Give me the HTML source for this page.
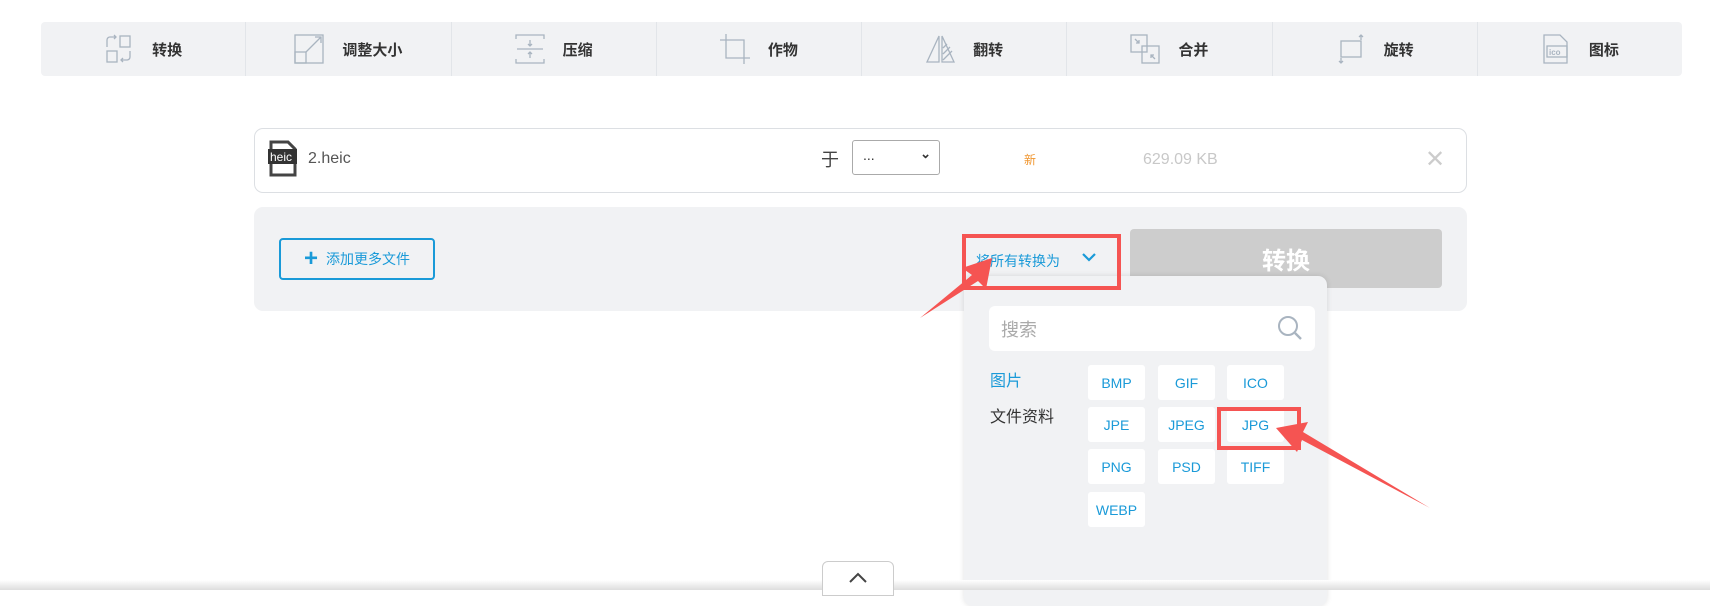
<!DOCTYPE html>
<html><head><meta charset="utf-8"><style>
*{box-sizing:border-box;margin:0;padding:0}
body{width:1710px;height:590px;overflow:hidden;background:#fff;font-family:"Liberation Sans","Noto Sans CJK SC",sans-serif;position:relative}
.tb{position:absolute;left:41px;top:22px;width:1641px;height:54px;background:#f1f2f4;border-radius:4px;display:flex}
.ti{flex:1;display:flex;align-items:center;justify-content:center;gap:18px;border-right:1px solid #e2e5e9;font-size:15px;font-weight:bold;color:#333}
.ti:last-child{border-right:none}
.ti svg{width:30px;height:30px}
.abs{position:absolute}
.fmt{position:absolute;width:57px;height:35px;background:#fff;border-radius:3px;color:#1a9ad8;font-size:14px;display:flex;align-items:center;justify-content:center}
</style></head><body>
<div class="tb">
<div class="ti"><svg viewBox="0 0 30 30" fill="none" stroke="#a9b4c0" stroke-width="1.3"><rect x="16" y="2" width="10" height="11"/><rect x="3" y="17" width="10" height="11"/><path d="M3 13V6a3 3 0 0 1 3-3h6M10 1l2 2-2 2M26 17v6a3 3 0 0 1-3 3h-6M19 24l-2 2 2 2"/></svg>转换</div>
<div class="ti"><svg viewBox="0 0 30 30" fill="none" stroke="#a9b4c0" stroke-width="1.3"><rect x="1" y="1" width="28" height="28"/><rect x="1" y="18" width="11" height="11"/><path d="M12 18L27 3M21 3h6v6"/></svg>调整大小</div>
<div class="ti"><svg viewBox="0 0 30 30" fill="none" stroke="#a9b4c0" stroke-width="1.3"><path d="M1 5V1h28v4M1 25v4h28v-4M2 15h26M15 6v6M13 10l2 2 2-2M15 24v-6M13 20l2-2 2 2"/></svg>压缩</div>
<div class="ti"><svg viewBox="0 0 30 30" fill="none" stroke="#a9b4c0" stroke-width="1.3"><path d="M6 0v24h24M0 6h24v24"/></svg>作物</div>
<div class="ti"><svg viewBox="0 0 30 30" fill="none" stroke="#a9b4c0" stroke-width="1.3"><path d="M14 2L2 28h12zM17 2l12 26H17zM18 26l9-9M18 20l7-7M18 14l4-4"/></svg>翻转</div>
<div class="ti"><svg viewBox="0 0 30 30" fill="none" stroke="#a9b4c0" stroke-width="1.3"><rect x="1" y="1" width="16" height="17"/><rect x="12" y="12" width="17" height="17"/><path d="M5 5l4 4M9 6v3H6M25 25l-4-4M21 24v-3h3"/></svg>合并</div>
<div class="ti"><svg viewBox="0 0 30 30" fill="none" stroke="#a9b4c0" stroke-width="1.3"><rect x="5" y="7" width="20" height="16"/><path d="M25 6V2M23 3l2-2 2 2M5 24v4M3 27l2 2 2-2"/></svg>旋转</div>
<div class="ti"><svg viewBox="0 0 30 30" fill="none" stroke="#a9b4c0" stroke-width="1.3"><path d="M3 1h16l7 7v21H3z"/><rect x="6" y="12" width="20" height="11"/><text x="8" y="21" font-size="8" fill="#a9b4c0" stroke="none" font-family="Liberation Sans">ico</text></svg>图标</div>
</div>

<div class="abs" style="left:254px;top:128px;width:1213px;height:65px;border:1px solid #dcdfe3;border-radius:9px"></div>
<svg class="abs" style="left:268px;top:140px" width="29" height="37" viewBox="0 0 29 37"><path d="M3 2h17l7 7v26H3z" fill="#fff" stroke="#444" stroke-width="3"/><rect x="0" y="9" width="29" height="15" fill="#333"/><text x="2" y="21" font-size="12" fill="#fff" font-family="Liberation Sans">heic</text></svg>
<div class="abs" style="left:308px;top:150px;font-size:16px;color:#555">2.heic</div>
<div class="abs" style="left:821px;top:146px;font-size:18px;color:#444">于</div>
<div class="abs" style="left:852px;top:140px;width:88px;height:35px;border:1px solid #aaa;border-radius:3px;font-size:14px;color:#333;padding:6px 0 0 10px">...<span style="position:absolute;right:8px;top:5px;font-size:13px;font-weight:bold">&#8964;</span></div>
<div class="abs" style="left:1024px;top:151px;font-size:12px;color:#f0962f">新</div>
<div class="abs" style="left:1143px;top:151px;font-size:16px;color:#c8c8c8">629.09 KB</div>
<div class="abs" style="left:1425px;top:148px;font-size:24px;color:#ccc;line-height:24px">✕</div>

<div class="abs" style="left:254px;top:207px;width:1213px;height:104px;background:#f1f2f4;border-radius:9px"></div>
<div class="abs" style="left:279px;top:238px;width:156px;height:42px;border:2px solid #1a9ad8;border-radius:4px;color:#1a9ad8;font-size:14px;display:flex;align-items:center;justify-content:center;gap:8px"><span style="font-size:24px;font-weight:bold;line-height:20px">+</span>添加更多文件</div>
<div class="abs" style="left:976px;top:251px;font-size:14px;color:#1a9ad8">将所有转换为</div>
<svg class="abs" style="left:1082px;top:253px" width="14" height="10"><path d="M1 1l6 6 6-6" fill="none" stroke="#1a9ad8" stroke-width="2.2"/></svg>
<div class="abs" style="left:1130px;top:229px;width:312px;height:59px;background:#cdcdcd;border-radius:4px;color:#fff;font-size:24px;font-weight:bold;display:flex;align-items:center;justify-content:center">转换</div>

<div class="abs" style="left:964px;top:276px;width:363px;height:330px;background:#f1f2f4;border-radius:9px;box-shadow:0 0 6px rgba(0,0,0,.12)"></div>
<div class="abs" style="left:989px;top:306px;width:326px;height:45px;background:#fff;border-radius:6px"></div>
<div class="abs" style="left:1001px;top:316px;font-size:18px;color:#aaa">搜索</div>
<svg class="abs" style="left:1277px;top:315px" width="26" height="26"><circle cx="11" cy="11" r="9" fill="none" stroke="#a9b4c0" stroke-width="2"/><path d="M18 18l6 6" stroke="#a9b4c0" stroke-width="2.4"/></svg>
<div class="abs" style="left:990px;top:367px;font-size:16px;color:#1a9ad8">图片</div>
<div class="abs" style="left:990px;top:403px;font-size:16px;color:#333">文件资料</div>
<div class="fmt" style="left:1088px;top:365px">BMP</div>
<div class="fmt" style="left:1158px;top:365px">GIF</div>
<div class="fmt" style="left:1227px;top:365px">ICO</div>
<div class="fmt" style="left:1088px;top:407px">JPE</div>
<div class="fmt" style="left:1158px;top:407px">JPEG</div>
<div class="fmt" style="left:1227px;top:407px">JPG</div>
<div class="fmt" style="left:1088px;top:449px">PNG</div>
<div class="fmt" style="left:1158px;top:449px">PSD</div>
<div class="fmt" style="left:1227px;top:449px">TIFF</div>
<div class="fmt" style="left:1088px;top:492px">WEBP</div>

<div class="abs" style="left:962px;top:234px;width:159px;height:56px;border:4px solid #f55452"></div>
<div class="abs" style="left:1217px;top:407px;width:84px;height:43px;border:4px solid #f55452"></div>
<svg class="abs" style="left:0;top:0" width="1710" height="590"><path d="M920 318L972 275L962 268L992 258L986 289L978 281Z" fill="#f55452"/><path d="M1430 508L1302 440L1297 452L1276 428L1308 422L1303 432Z" fill="#f55452"/></svg>

<div class="abs" style="left:0;top:580px;width:1710px;height:10px;background:linear-gradient(#fff,#ddd)"></div>
<div class="abs" style="left:822px;top:561px;width:72px;height:35px;background:#fff;border:1px solid #ccc;border-radius:6px 6px 0 0"></div>
<svg class="abs" style="left:849px;top:572px" width="18" height="11"><path d="M1 10l8-8 8 8" fill="none" stroke="#444" stroke-width="2"/></svg>
</body></html>
